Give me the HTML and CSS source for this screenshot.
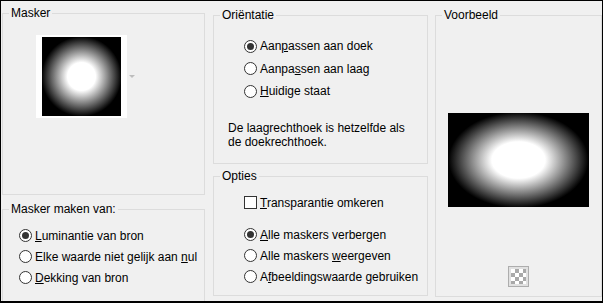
FILE: index.html
```html
<!DOCTYPE html>
<html lang="nl">
<head>
    <meta charset="UTF-8">
    <title>Masker uit afbeelding</title>
    <link rel="stylesheet" href="styles.css">
</head>
<body>
    <div class="dialog">
        <div class="col col-left">
            <div class="group group-mask">
                <div class="caption">Masker</div>
                <div class="mask-picker">
                    <div class="mask-thumb"><div class="mask-img"></div></div>
                    <span class="drop-arrow"></span>
                </div>
            </div>
            <div class="group group-source">
                <div class="caption">Masker maken van:</div>
                <div class="options source-options">
                    <label class="option"><span class="radio checked"></span><span><u>L</u>uminantie van bron</span></label>
                    <label class="option"><span class="radio"></span><span>Elke waarde niet gelijk aan <u>n</u>ul</span></label>
                    <label class="option"><span class="radio"></span><span><u>D</u>ekking van bron</span></label>
                </div>
            </div>
        </div>

        <div class="col col-mid">
            <div class="group group-orient">
                <div class="caption">Oriëntatie</div>
                <div class="options orient-options">
                    <label class="option tall"><span class="radio checked"></span><span>Aan<u>p</u>assen aan doek</span></label>
                    <label class="option tall"><span class="radio"></span><span>Aanpa<u>s</u>sen aan laag</span></label>
                    <label class="option tall"><span class="radio"></span><span><u>H</u>uidige staat</span></label>
                </div>
                <p class="note">De laagrechthoek is hetzelfde als de doekrechthoek.</p>
            </div>
            <div class="group group-opts">
                <div class="caption">Opties</div>
                <div class="options opts-check">
                    <label class="option"><span class="checkbox"></span><span><u>T</u>ransparantie omkeren</span></label>
                </div>
                <div class="options opts-radios">
                    <label class="option"><span class="radio checked"></span><span><u>A</u>lle maskers verbergen</span></label>
                    <label class="option"><span class="radio"></span><span>Alle maskers <u>w</u>eergeven</span></label>
                    <label class="option"><span class="radio"></span><span>A<u>f</u>beeldingswaarde gebruiken</span></label>
                </div>
            </div>
        </div>

        <div class="col col-right">
            <div class="group group-preview">
                <div class="caption">Voorbeeld</div>
                <div class="preview"></div>
                <div class="bg-button"><span class="checker"></span></div>
            </div>
        </div>
    </div>
</body>
</html>
```

FILE: styles.css
```css
body {
    margin: 0;
    font-family: "Liberation Sans", Arial, sans-serif;
    font-size: 12px;
    color: #000;
}
.dialog {
    box-sizing: border-box;
    width: 603px;
    height: 303px;
    border: 1px solid #000;
    border-bottom-width: 2px;
    background: #f0f0f0;
    display: flex;
    padding-left: 1px;
    overflow: hidden;
}
.col {
    display: flex;
    flex-direction: column;
}
.col-left {
    width: 203px;
    margin-right: 8px;
    padding-top: 12px;
}
.col-mid {
    width: 215px;
    margin-right: 7px;
    padding-top: 14px;
}
.col-right {
    width: 167px;
    padding-top: 14px;
}
.group {
    box-sizing: border-box;
    border: 1px solid #dcdcdc;
    display: flex;
    flex-direction: column;
    flex-shrink: 0;
}
.caption {
    align-self: flex-start;
    margin: -8px 0 0 6px;
    padding: 0 2px;
    background: #f0f0f0;
    line-height: 15px;
}

/* left column */
.group-mask {
    height: 182px;
}
.mask-picker {
    display: flex;
    align-items: center;
    margin: 14px 0 0 33px;
}
.mask-thumb {
    background: #fff;
    padding: 2px 6px;
}
.mask-img {
    width: 79px;
    height: 79px;
    background: radial-gradient(circle at center, #fff 0, #fff 14px, #000 40px);
}
.drop-arrow {
    margin-left: 2px;
    width: 0;
    height: 0;
    border-left: 3px solid transparent;
    border-right: 3px solid transparent;
    border-top: 3px solid #bdbdbd;
}
.group-source {
    height: 93px;
    margin-top: 14px;
}
.source-options {
    margin-top: 8px;
    padding-left: 16px;
}

/* options */
.options {
    display: flex;
    flex-direction: column;
}
.option {
    display: flex;
    align-items: center;
    gap: 3px;
    height: 21px;
    white-space: nowrap;
}
.option.tall {
    height: 22.5px;
}
.option u {
    text-underline-offset: 1px;
}
.radio,
.checkbox {
    box-sizing: border-box;
    width: 13px;
    height: 13px;
    border: 1px solid #333;
    background: #fff;
    flex-shrink: 0;
    display: flex;
    align-items: center;
    justify-content: center;
}
.radio {
    border-radius: 50%;
}
.radio.checked::after {
    content: "";
    width: 7px;
    height: 7px;
    border-radius: 50%;
    background: #333;
}

/* middle column */
.group-orient {
    height: 149px;
}
.orient-options {
    margin-top: 12px;
    padding-left: 30px;
}
.note {
    width: 185px;
    margin: 18px 0 0 14px;
    line-height: 14px;
}
.group-opts {
    height: 120px;
    margin-top: 12px;
}
.opts-check {
    margin-top: 8px;
    padding-left: 30px;
}
.opts-radios {
    margin-top: 11px;
    padding-left: 30px;
}

/* right column */
.group-preview {
    height: 282px;
    align-items: center;
}
.group-preview .caption {
    align-self: flex-start;
}
.preview {
    width: 141px;
    height: 94px;
    margin-top: 90px;
    background: radial-gradient(ellipse 70px 48px at center, #fff 0, #fff 38%, #000 100%);
}
.bg-button {
    box-sizing: border-box;
    width: 21px;
    height: 21px;
    margin-top: 59px;
    border: 1px solid #adadad;
    background: #e1e1e1;
    padding: 2px;
}
.checker {
    display: block;
    width: 15px;
    height: 15px;
    background: repeating-conic-gradient(#a9a9a9 0 25%, #fff 0 50%) 0 0 / 8px 8px;
}
```
